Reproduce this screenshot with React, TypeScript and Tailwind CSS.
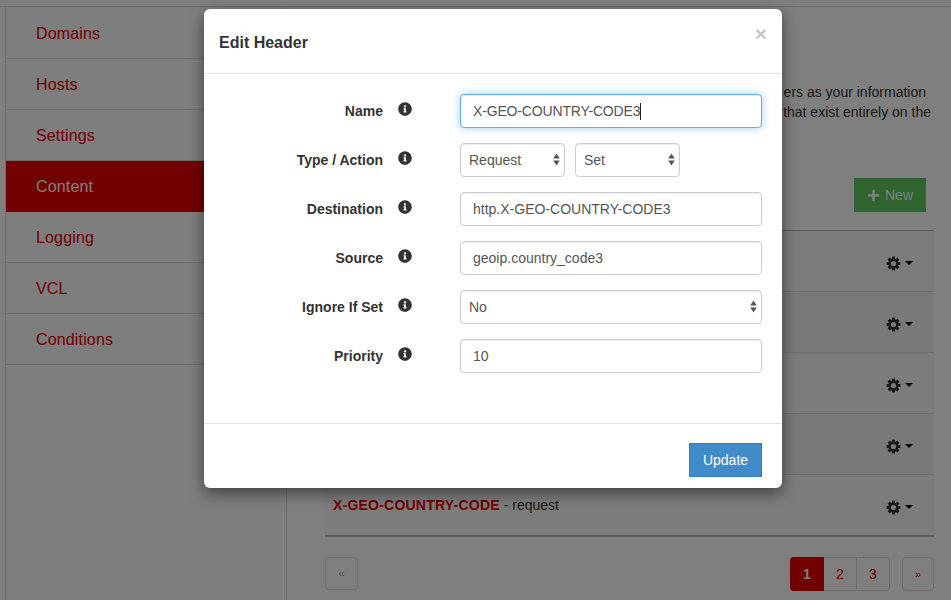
import React from "react";
import { FaInfoCircle, FaPlus } from "react-icons/fa";

const nav = ["Domains", "Hosts", "Settings", "Content", "Logging", "VCL", "Conditions"];

function Gear() {
  return (
    <svg width="15" height="15" viewBox="0 0 15 15" fill="#333">
      {[0, 45, 90, 135, 180, 225, 270, 315].map((a) => (
        <rect key={a} x="6" y="0.6" width="3" height="3.2" transform={`rotate(${a} 7.5 7.5)`} />
      ))}
      <circle cx="7.5" cy="7.5" r="3.9" fill="none" stroke="#333" strokeWidth="2.6" />
    </svg>
  );
}

function Info() {
  return (
    <div className="w-[77px] pl-[15px] pt-[8px] self-start text-[#333]">
      <FaInfoCircle className="w-[14px] h-[14px]" />
    </div>
  );
}

function Label({ children }: { children: React.ReactNode }) {
  return <label className="w-[179px] text-right font-bold text-[14px] leading-[34px] text-[#333]">{children}</label>;
}

function Arrows() {
  return (
    <svg className="absolute right-[5px] top-[10px] pointer-events-none" width="7" height="13" viewBox="0 0 7 13">
      <path d="M3.5 0.5 L6.8 5.5 H0.2 Z M3.5 12.5 L6.8 7.5 H0.2 Z" fill="#555" />
    </svg>
  );
}

function Select({ value, width }: { value: string; width: string }) {
  return (
    <div className={`relative ${width}`}>
      <select
        defaultValue={value}
        className="appearance-none w-full h-[34px] pl-[8px] bg-white border border-[#ccc] rounded-[4px] text-[14px] text-[#555] shadow-[inset_0_1px_1px_rgba(0,0,0,0.075)] outline-none"
      >
        <option>{value}</option>
      </select>
      <Arrows />
    </div>
  );
}

function TextInput({ value }: { value: string }) {
  return (
    <input
      readOnly
      value={value}
      className="w-[302px] h-[34px] px-[12px] bg-white border border-[#ccc] rounded-[4px] text-[14px] text-[#555] shadow-[inset_0_1px_1px_rgba(0,0,0,0.075)] outline-none"
    />
  );
}

export default function App() {
  return (
    <div className="relative w-[951px] h-[600px] overflow-hidden bg-white font-['Liberation_Sans',Arial,sans-serif] text-[14px] text-[#333]">
      <div className="h-[6px] border-b border-[#ddd] box-content" />
      <div className="flex h-[593px]">
        <aside className="ml-[5px] w-[282px] shrink-0 border-x border-[#ddd] bg-[#fcfcfc]">
          {nav.map((n, i) =>
            n === "Content" ? (
              <div key={n} className="h-[51px] pl-[30px] pt-[15px] bg-[#e40000] text-white text-[16px] leading-[22px] tracking-[0.15px]">
                {n}
              </div>
            ) : (
              <div
                key={n}
                className={`${i === 0 ? "h-[52px] pt-[16px]" : "h-[51px] pt-[15px]"} pl-[30px] border-b border-[#ddd] text-[#e40000] text-[16px] leading-[22px] tracking-[0.15px]`}
              >
                {n}
              </div>
            )
          )}
        </aside>
        <main className="ml-[38px] w-[609px] shrink-0">
          <div className="h-[223px] relative">
            <div className="absolute right-[3px] top-[75px] text-right leading-[20px] text-[#333]">
              <div className="pr-[5px]">ers as your information</div>
              <div>that exist entirely on the</div>
            </div>
            <button className="absolute left-[529px] top-[171px] w-[72px] h-[34px] flex items-center justify-center gap-[5px] bg-[#60c860] text-white text-[14px]">
              <FaPlus className="w-[13px] h-[13px]" />
              New
            </button>
          </div>
          <div className="border-t border-[#bbb]">
            {[0, 1, 2, 3, 4].map((i) => (
              <div
                key={i}
                className={`flex justify-between pl-[8px] pr-[21px] pt-[20px] ${i === 4 ? "h-[62px] border-b-2 border-[#bbb]" : "h-[61px] border-b border-[#ddd]"} ${i % 2 === 0 ? "bg-[#f9f9f9]" : "bg-[#f3f3f3]"}`}
              >
                <span className="leading-[20px]">
                  {i === 4 && (
                    <>
                      <span className="font-bold text-[#e40000] tracking-[0.22px]">X-GEO-COUNTRY-CODE</span> - request
                    </>
                  )}
                </span>
                <span className="flex items-center gap-[4px] h-[24px]">
                  <Gear />
                  <span className="w-0 h-0 border-x-[4px] border-x-transparent border-t-[4px] border-t-black" />
                </span>
              </div>
            ))}
          </div>
          <div className="flex items-start justify-between mt-[20px]">
            <button className="w-[33px] h-[33px] rounded-[4px] border border-[#ddd] bg-white text-[#999] text-[11px]">«</button>
            <div className="flex gap-[12px]">
              <div className="flex h-[34px]">
                <span className="w-[34px] flex items-center justify-center rounded-l-[4px] bg-[#e40000] text-white font-bold">1</span>
                <span className="w-[33px] flex items-center justify-center border-y border-r border-[#ddd] text-[#e40000]">2</span>
                <span className="w-[33px] flex items-center justify-center border-y border-r border-[#ddd] rounded-r-[4px] text-[#e40000]">3</span>
              </div>
              <button className="w-[32px] h-[34px] rounded-[4px] border border-[#ddd] text-[#e40000] text-[11px]">»</button>
            </div>
          </div>
        </main>
      </div>

      <div className="absolute inset-0 bg-black/50" />

      <div className="absolute left-[204px] top-[9px] w-[578px] h-[479px] bg-white rounded-[6px] shadow-[0_5px_15px_rgba(0,0,0,0.5)] flex flex-col">
        <div className="h-[65px] shrink-0 border-b border-[#e5e5e5] flex items-center justify-between pl-[15px] pr-[15px]">
          <h4 className="font-bold text-[16px] text-[#333] mt-[3px]">Edit Header</h4>
          <span className="font-bold text-[21px] leading-none text-[#c9c9c9] -mt-[16px]">×</span>
        </div>
        <div className="flex-1 pt-[20px] flex flex-col gap-[15px]">
          <div className="flex">
            <Label>Name</Label>
            <Info />
            <div className="w-[302px] h-[34px] flex items-center px-[12px] bg-white border border-[#66afe9] rounded-[4px] text-[14px] tracking-[-0.16px] text-[#555] shadow-[inset_0_1px_1px_rgba(0,0,0,0.075),0_0_8px_rgba(102,175,233,0.6)]">
              X-GEO-COUNTRY-CODE3
              <span className="w-px h-[17px] bg-[#222]" />
            </div>
          </div>
          <div className="flex">
            <Label>Type / Action</Label>
            <Info />
            <div className="flex gap-[10px]">
              <Select value="Request" width="w-[105px]" />
              <Select value="Set" width="w-[105px]" />
            </div>
          </div>
          <div className="flex">
            <Label>Destination</Label>
            <Info />
            <TextInput value="http.X-GEO-COUNTRY-CODE3" />
          </div>
          <div className="flex">
            <Label>Source</Label>
            <Info />
            <TextInput value="geoip.country_code3" />
          </div>
          <div className="flex">
            <Label>Ignore If Set</Label>
            <Info />
            <Select value="No" width="w-[302px]" />
          </div>
          <div className="flex">
            <Label>Priority</Label>
            <Info />
            <TextInput value="10" />
          </div>
        </div>
        <div className="h-[65px] shrink-0 border-t border-[#e5e5e5] flex justify-end pr-[20px] pt-[19px]">
          <button className="w-[73px] h-[34px] bg-[#428bca] border border-[#357ebd] text-white text-[14px]">Update</button>
        </div>
      </div>
    </div>
  );
}
